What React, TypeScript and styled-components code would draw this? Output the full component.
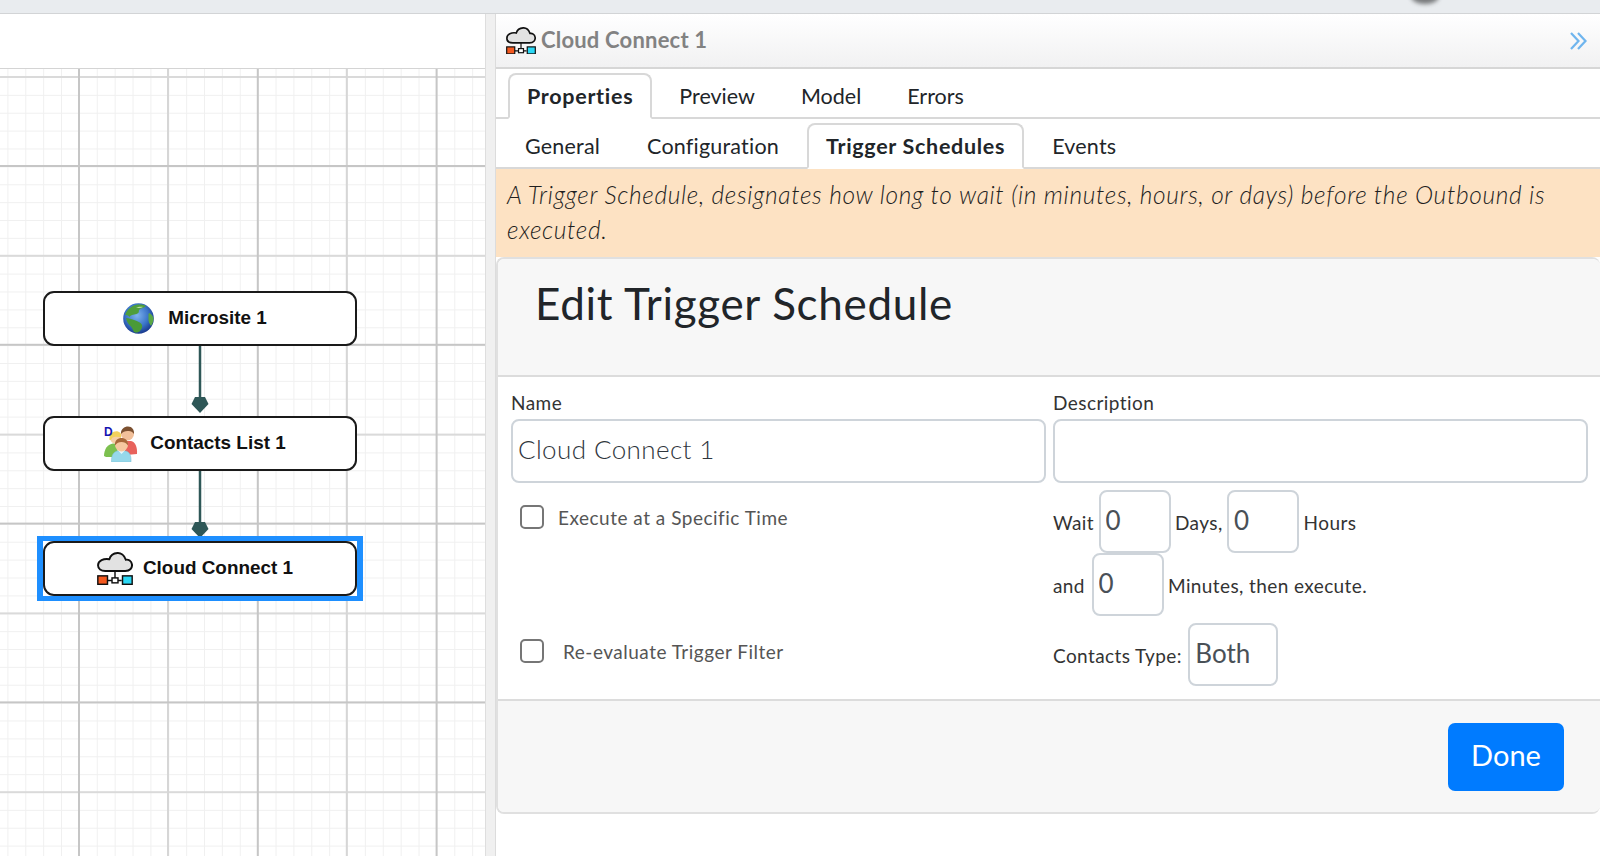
import React from 'react'
import styled, { createGlobalStyle } from 'styled-components'

const GlobalStyle = createGlobalStyle`
  html, body {
    margin: 0;
    padding: 0;
    background: #fff;
    overflow: hidden;
  }
  * {
    box-sizing: border-box;
  }
  body {
    font-family: Lato, 'Open Sans', sans-serif;
    color: #212529;
  }
`

const Page = styled.div`
  width: 1600px;
  height: 856px;
  display: flex;
  flex-direction: column;
  overflow: hidden;
`

const TopBand = styled.div`
  position: relative;
  height: 14px;
  flex: none;
  background: #e9ecef;
  border-bottom: 1px solid #d2d4d6;
  overflow: hidden;
`

const CursorShadow = styled.div`
  position: absolute;
  left: 1411px;
  top: -12px;
  width: 28px;
  height: 16px;
  border-radius: 50%;
  background: #77797b;
  filter: blur(2px);
`

const Main = styled.div`
  flex: 1;
  display: flex;
  min-height: 0;
`

const LeftPanel = styled.div`
  width: 485px;
  flex: none;
  display: flex;
  flex-direction: column;
  background: #fff;
`

const CanvasHeader = styled.div`
  height: 55px;
  flex: none;
  border-bottom: 1px solid #d4d4d4;
`

const Canvas = styled.div`
  position: relative;
  flex: 1;
  overflow: hidden;
  background-color: #fff;
  background-image:
    linear-gradient(to right, #c6c6c6 2px, transparent 2px),
    linear-gradient(to bottom, #c6c6c6 2px, transparent 2px),
    linear-gradient(to right, #d6d6d6 2px, transparent 2px),
    linear-gradient(to bottom, #dadada 2px, transparent 2px),
    linear-gradient(to right, #f0f0f0 1px, transparent 1px),
    linear-gradient(to bottom, #f0f0f0 1px, transparent 1px);
  background-size:
    178.8px 100%,
    100% 178.8px,
    178.8px 100%,
    100% 178.8px,
    17.88px 100%,
    100% 17.88px;
  background-position:
    78px 0,
    0 96px,
    167px 0,
    0 7px,
    7.4px 0,
    0 8px;
`

const Wires = styled.svg`
  position: absolute;
  left: 0;
  top: 0;
`

const NodeSlot = styled.div<{ $top: number; $selected?: boolean }>`
  position: absolute;
  left: ${({ $selected }) => ($selected ? '37px' : '43px')};
  top: ${({ $top }) => $top}px;
  ${({ $selected }) =>
    $selected &&
    `
    border-style: solid;
    border-color: #1e8fff;
    border-width: 5px 6px;
    background: #fff;
  `}
`

const Node = styled.div`
  width: 314px;
  height: 55px;
  padding-right: 10px;
  border: 2px solid #1a1a1a;
  border-radius: 11px;
  background: #fff;
  display: flex;
  align-items: center;
  justify-content: center;
`

const NodeLabel = styled.span<{ $gap: number }>`
  margin-left: ${({ $gap }) => $gap}px;
  padding-bottom: 1px;
  font-family: 'Liberation Sans', Arial, sans-serif;
  font-weight: 700;
  font-size: 18.9px;
  color: #111;
`

const Gutter = styled.div`
  width: 11px;
  flex: none;
  background: #f0f0f0;
  border-left: 1px solid #dedede;
  border-right: 1px solid #dcdcdc;
`

const RightPanel = styled.div`
  flex: 1;
  display: flex;
  flex-direction: column;
  min-width: 0;
  background: #fff;
`

const PanelHeader = styled.div`
  height: 55px;
  flex: none;
  display: flex;
  align-items: center;
  padding: 0 12px 0 10px;
  background: linear-gradient(to bottom, #fff, #f1f1f2);
  border-bottom: 2px solid #d6d6d6;
`

const PanelTitle = styled.span`
  margin-left: 5px;
  padding-bottom: 2px;
  font-size: 22px;
  font-weight: 700;
  letter-spacing: 0.2px;
  color: #828282;
  flex: 1;
`

const TabBar = styled.div<{ $indent: number; $gap: number; $spacing: number }>`
  height: 50px;
  flex: none;
  display: flex;
  align-items: flex-end;
  gap: ${({ $gap }) => $gap}px;
  padding-left: ${({ $indent }) => $indent}px;
  letter-spacing: ${({ $spacing }) => $spacing}px;
  border-bottom: 2px solid #d8d8d8;
`

const Tab = styled.div<{ $active?: boolean }>`
  height: 46px;
  margin-bottom: -2px;
  padding: 0 17px;
  display: flex;
  align-items: center;
  font-size: 21.5px;
  font-weight: ${({ $active }) => ($active ? 700 : 400)};
  ${({ $active }) => $active && 'letter-spacing: 0.7px;'}
  color: #212529;
  border: 2px solid ${({ $active }) => ($active ? '#d8d8d8' : 'transparent')};
  border-bottom-color: ${({ $active }) => ($active ? '#fff' : 'transparent')};
  border-radius: 8px 8px 0 0;
  background: ${({ $active }) => ($active ? '#fff' : 'transparent')};
`

const Notice = styled.div`
  height: 88px;
  flex: none;
  padding: 8px 11px 0;
  background: #fde2c3;
  font-size: 24.5px;
  font-style: italic;
  font-weight: 300;
  letter-spacing: 0.65px;
  line-height: 35px;
  color: #1f1f1f;
`

const Card = styled.div`
  height: 557px;
  flex: none;
  display: flex;
  flex-direction: column;
  border: 2px solid #e0e0e0;
  border-right: none;
  border-radius: 8px;
  overflow: hidden;
`

const CardHeader = styled.div`
  height: 118px;
  flex: none;
  padding: 15px 0 0 37px;
  background: #f7f7f7;
  border-bottom: 2px solid #dcdcdc;
`

const CardTitle = styled.h2`
  margin: 0;
  font-size: 44px;
  font-weight: 400;
  letter-spacing: 0.7px;
  line-height: 58px;
  color: #212529;
`

const Form = styled.div`
  flex: 1;
  display: grid;
  grid-template-columns: 535px 535px;
  grid-template-rows: 100px 133px 1fr;
  column-gap: 7px;
  padding: 13px 0 0 13px;
`

const Field = styled.div`
  display: flex;
  flex-direction: column;
`

const Label = styled.label`
  font-size: 19px;
  letter-spacing: 0.45px;
  line-height: 26px;
  margin-bottom: 3px;
  color: #333;
`

const TextInput = styled.input`
  width: 100%;
  height: 64px;
  padding: 0 5px 4px;
  font-family: inherit;
  font-size: 26px;
  font-weight: 300;
  letter-spacing: 0.4px;
  color: #2f363d;
  background: #fff;
  border: 2px solid #ced4da;
  border-radius: 8px;
  outline: none;
`

const CheckRow = styled.div<{ $gap: number; $top: number }>`
  display: flex;
  align-items: center;
  padding: ${({ $top }) => $top}px 0 0 9px;
  gap: ${({ $gap }) => $gap}px;
  align-self: start;
`

const Check = styled.input`
  appearance: none;
  width: 24px;
  height: 24px;
  margin: 0;
  background: #fff;
  border: 2px solid #767676;
  border-radius: 5px;
`

const CheckText = styled.span`
  font-size: 19px;
  letter-spacing: 0.5px;
  color: #555;
`

const InlineRows = styled.div`
  display: flex;
  flex-direction: column;
`

const InlineRow = styled.div`
  display: flex;
  align-items: center;
  font-size: 19px;
  letter-spacing: 0.4px;
  color: #333;
  gap: 4.5px;
`

const InlineText = styled.span<{ $min?: number }>`
  padding-top: 2px;
  min-width: ${({ $min }) => $min ?? 0}px;
`

const SmallInput = styled.input<{ $w?: number }>`
  width: ${({ $w }) => $w ?? 72}px;
  height: 63px;
  padding: 0 5px 4px;
  font-family: inherit;
  font-size: 26px;
  color: #495057;
  background: #fff;
  border: 2px solid #ced4da;
  border-radius: 8px;
  outline: none;
`

const ContactsRow = styled(InlineRow)`
  align-self: start;
  gap: 6.5px;
`

const CardFooter = styled.div`
  height: 113px;
  flex: none;
  display: flex;
  justify-content: flex-end;
  align-items: flex-start;
  padding: 22px 36px 0 0;
  background: #f7f7f7;
  border-top: 2px solid #dcdcdc;
`

const DoneButton = styled.button`
  width: 116px;
  height: 68px;
  padding: 0 0 5px;
  font-family: inherit;
  font-size: 29px;
  color: #fff;
  background: #007bff;
  border: none;
  border-radius: 7px;
`

const CloudIcon: React.FC<{ width: number }> = ({ width }) => (
  <svg width={width} viewBox='0 0 35 32' style={{ flex: 'none' }}>
    <path
      d='M8 18.5H27.5C32 18.5 34.5 15.5 34 12C33.5 8.5 30.5 7 28 7.5C26.5 3 23 .8 20 1C16 1.2 13 3.5 12 7C6.5 6 1 8.5 1 13C1 16.5 4 18.5 8 18.5Z'
      fill='#e2e2e2'
      stroke='#111'
      strokeWidth='1.9'
    />
    <path d='M17.5 18.5V27M10 27.8H24' stroke='#111' strokeWidth='1.4' fill='none' />
    <rect x='.8' y='23.2' width='9.4' height='8.2' fill='#f4591f' stroke='#111' strokeWidth='1.4' />
    <rect x='14.6' y='25.2' width='5.8' height='4.8' fill='#fff' stroke='#111' strokeWidth='1.4' />
    <rect x='24.8' y='23.2' width='9.4' height='8.2' fill='#2bd8f5' stroke='#111' strokeWidth='1.4' />
  </svg>
)

const GlobeIcon = () => (
  <svg width='32' height='32' viewBox='0 0 32 32' style={{ flex: 'none' }}>
    <defs>
      <radialGradient id='sea' cx='45%' cy='40%' r='62%'>
        <stop offset='0%' stopColor='#7fb4ee' />
        <stop offset='60%' stopColor='#3a74c8' />
        <stop offset='100%' stopColor='#17358a' />
      </radialGradient>
    </defs>
    <circle cx='15.5' cy='15.5' r='15.3' fill='url(#sea)' />
    <path
      d='M9 3.5C13 1 19 1 23 3C21 5 18 5 16.5 6.5C15 8 17 9 14.5 10.5C12 12 8 11 6.5 14C5 12 3 12 2.2 12C3 8.5 5.5 5.5 9 3.5Z'
      fill='#4f9e3c'
    />
    <path
      d='M3 15C6 15 8 16 11 17C14 18 17 19 18.5 21C20 23 19 26 17 28C15.5 29.5 13 30 11 29C9.5 26 9 24 7 22.5C5 21 3.5 18 3 15Z'
      fill='#4a9a38'
    />
    <path d='M26 10C28 10.5 30 13 30.5 15C30.5 18 29.5 21 28 23C26.5 21 25 18 25.5 15C25.7 13 25 11.5 26 10Z' fill='#5aa844' />
    <path d='M13 4.5C15 3.5 19 3.5 20 4C18 5 15.5 5.2 13 4.5Z' fill='#bfe0a6' />
  </svg>
)

const PeopleIcon = () => (
  <svg width='34' height='36' viewBox='0 0 34 36' style={{ flex: 'none' }}>
    <path d='M0 30C0 23 4 18 9 17.5H13L14 31H2Z' fill='#7cc04f' />
    <circle cx='11.5' cy='12' r='5.5' fill='#f6cfa6' />
    <path d='M5.5 14C4.5 7.5 10 4.5 14 5.5C17 6.5 18 9 17 11.5C14 10.5 10 10.5 8 12C7.5 13.5 7 14 5.5 14Z' fill='#f3d15c' />
    <path d='M19 15H27C31 15.5 33.5 21 33 28L22 29Z' fill='#e8625c' />
    <circle cx='23.5' cy='8' r='6.5' fill='#f2c09a' />
    <path d='M17 8C16.5 3 20.5 .5 24 .5C28 .5 30.5 4 30 8C28.5 5.5 26 4.5 23.5 5C21 5 18.5 6 17 8Z' fill='#7c5030' />
    <path d='M7.5 36C7 29 10 25.5 13.5 25H21.5C25 25.5 27.5 29 27 36Z' fill='#96d8ea' stroke='#7bbdd0' strokeWidth='.5' />
    <path d='M14.5 25L17.5 28L20.5 25Z' fill='#e6f6fb' />
    <circle cx='17.5' cy='19' r='6.5' fill='#f6c8a0' />
    <path d='M11 19.5C10.5 14 14 12 17.5 12C21 12 24.5 14 24 19.5C22.5 17 20 16 17.5 16C15 16 12.5 17 11 19.5Z' fill='#a8683a' />
    <text x='0' y='10' fontFamily="'Liberation Sans', sans-serif" fontWeight='700' fontSize='12' fill='#1515b0'>
      D
    </text>
  </svg>
)

const Arrow: React.FC<{ y: number }> = ({ y }) => (
  <>
    <path d={`M200 ${y}V${y + 54}`} stroke='#2e5757' strokeWidth='2.5' />
    <path
      d={`M195 ${y + 52}H205L208.5 ${y + 59}L200 ${y + 68}L191.5 ${y + 59}Z`}
      fill='#2e5757'
    />
  </>
)

const mainTabs = ['Properties', 'Preview', 'Model', 'Errors']
const subTabs = ['General', 'Configuration', 'Trigger Schedules', 'Events']

export default function App() {
  return (
    <Page>
      <GlobalStyle />
      <TopBand>
        <CursorShadow />
      </TopBand>
      <Main>
        <LeftPanel>
          <CanvasHeader />
          <Canvas>
            <Wires width='485' height='787'>
              <Arrow y={276} />
              <Arrow y={401} />
            </Wires>
            <NodeSlot $top={222}>
              <Node>
                <GlobeIcon />
                <NodeLabel $gap={13}>Microsite 1</NodeLabel>
              </Node>
            </NodeSlot>
            <NodeSlot $top={347}>
              <Node>
                <PeopleIcon />
                <NodeLabel $gap={12}>Contacts List 1</NodeLabel>
              </Node>
            </NodeSlot>
            <NodeSlot $top={467} $selected>
              <Node>
                <CloudIcon width={36} />
                <NodeLabel $gap={10}>Cloud Connect 1</NodeLabel>
              </Node>
            </NodeSlot>
          </Canvas>
        </LeftPanel>
        <Gutter />
        <RightPanel>
          <PanelHeader>
            <CloudIcon width={30} />
            <PanelTitle>Cloud Connect 1</PanelTitle>
            <svg width='20' height='20' viewBox='0 0 20 20'>
              <path d='M3 2L10.5 10L3 18M10 2L17.5 10L10 18' fill='none' stroke='#6fb5ee' strokeWidth='2.2' />
            </svg>
          </PanelHeader>
          <TabBar $indent={12} $gap={8} $spacing={0}>
            {mainTabs.map((t) => (
              <Tab key={t} $active={t === 'Properties'}>
                {t}
              </Tab>
            ))}
          </TabBar>
          <TabBar $indent={10} $gap={9} $spacing={0.2}>
            {subTabs.map((t) => (
              <Tab key={t} $active={t === 'Trigger Schedules'}>
                {t}
              </Tab>
            ))}
          </TabBar>
          <Notice>
            A Trigger Schedule, designates how long to wait (in minutes, hours, or days) before the Outbound is executed.
          </Notice>
          <Card>
            <CardHeader>
              <CardTitle>Edit Trigger Schedule</CardTitle>
            </CardHeader>
            <Form>
              <Field>
                <Label>Name</Label>
                <TextInput defaultValue='Cloud Connect 1' />
              </Field>
              <Field>
                <Label>Description</Label>
                <TextInput />
              </Field>
              <CheckRow $gap={14} $top={15}>
                <Check type='checkbox' />
                <CheckText>Execute at a Specific Time</CheckText>
              </CheckRow>
              <InlineRows>
                <InlineRow>
                  <InlineText>Wait</InlineText>
                  <SmallInput defaultValue='0' />
                  <InlineText>Days,</InlineText>
                  <SmallInput defaultValue='0' />
                  <InlineText>Hours</InlineText>
                </InlineRow>
                <InlineRow>
                  <InlineText $min={34}>and</InlineText>
                  <SmallInput defaultValue='0' />
                  <InlineText>Minutes, then execute.</InlineText>
                </InlineRow>
              </InlineRows>
              <CheckRow $gap={19} $top={16}>
                <Check type='checkbox' />
                <CheckText>Re-evaluate Trigger Filter</CheckText>
              </CheckRow>
              <ContactsRow>
                <InlineText>Contacts Type:</InlineText>
                <SmallInput $w={90} defaultValue='Both' />
              </ContactsRow>
            </Form>
            <CardFooter>
              <DoneButton>Done</DoneButton>
            </CardFooter>
          </Card>
        </RightPanel>
      </Main>
    </Page>
  )
}
